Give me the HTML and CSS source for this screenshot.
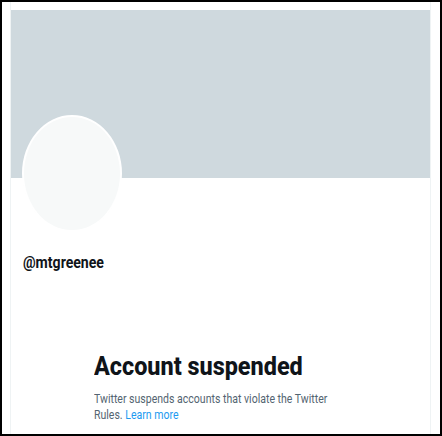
FILE: index.html
```html
<!DOCTYPE html>
<html>
<head>
<meta charset="utf-8">
<link rel="stylesheet" href="styles.css">
</head>
<body>
<div class="frame">
  <div class="column">
    <div class="banner"></div>
    <div class="avatar"></div>
    <div class="handle">@mtgreenee</div>
    <div class="empty">
      <h1 class="empty-title">Account suspended</h1>
      <p class="empty-text">Twitter suspends accounts that violate the Twitter Rules. <a class="link" href="#">Learn more</a></p>
    </div>
  </div>
</div>
</body>
</html>
```

FILE: styles.css
```css
html, body {
  margin: 0;
  padding: 0;
  background: #ffffff;
}
.frame {
  width: 442px;
  height: 436px;
  box-sizing: border-box;
  border: 2px solid #000000;
  padding: 0 9px 0 8px;
  overflow: hidden;
  font-family: Roboto, "Liberation Sans", sans-serif;
}
.column {
  height: 100%;
  box-sizing: border-box;
  border-left: 1px solid #eff3f4;
  border-right: 1px solid #eff3f4;
  padding-top: 8px;
}
.banner {
  height: 168px;
  background: #cfd9de;
}
.avatar {
  width: 100px;
  height: 117px;
  box-sizing: border-box;
  margin: -63px 0 0 11px;
  border: 2px solid #ffffff;
  border-radius: 50%;
  background: #f7f9f9;
}
.handle {
  margin: 21px 0 0 12px;
  font-size: 16px;
  line-height: 20px;
  font-weight: 700;
  color: #0f1419;
  transform: scaleX(0.88);
  transform-origin: left top;
}
.empty {
  padding: 0 0 0 83px;
  margin-top: 77px;
}
.empty-title {
  margin: 0;
  font-size: 26px;
  line-height: 32px;
  font-weight: 800;
  color: #0f1419;
  transform: scaleX(0.9);
  transform-origin: left top;
}
.empty-text {
  margin: 9px 0 0;
  width: 300px;
  font-size: 13px;
  line-height: 16px;
  color: #536471;
  transform: scaleX(0.81);
  transform-origin: left top;
}
.link {
  color: #1d9bf0;
  text-decoration: none;
}
```
